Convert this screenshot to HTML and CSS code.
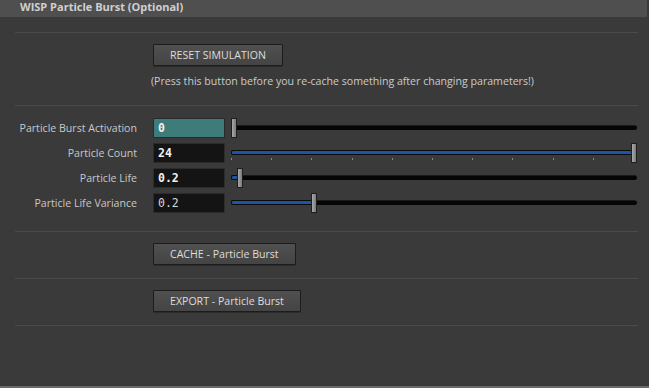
FILE: index.html
```html
<!DOCTYPE html>
<html lang="en">
<head>
  <meta charset="UTF-8">
  <title>WISP Particle Burst</title>
  <link rel="stylesheet" href="styles.css">
</head>
<body>
  <div class="panel-header">WISP Particle Burst (Optional)</div>

  <div class="panel-body">
    <hr class="sep">

    <!-- reset -->
    <div class="section">
      <div class="btn-row"><button class="btn btn-reset">RESET SIMULATION</button></div>
      <div class="help">(Press this button before you re-cache something after changing parameters!)</div>
    </div>

    <hr class="sep">

    <!-- parameters -->
    <div class="params">
      <div class="param">
        <label class="param-label">Particle Burst Activation</label>
        <div class="field field-active">0</div>
        <div class="slider">
          <div class="handle"></div>
          <div class="track"></div>
        </div>
      </div>

      <div class="param">
        <label class="param-label">Particle Count</label>
        <div class="field">24</div>
        <div class="slider slider-ticks">
          <div class="fill fill-grow"></div>
          <div class="handle"></div>
        </div>
      </div>

      <div class="param">
        <label class="param-label">Particle Life</label>
        <div class="field">0.2</div>
        <div class="slider">
          <div class="fill" style="width: 5px"></div>
          <div class="handle"></div>
          <div class="track"></div>
        </div>
      </div>

      <div class="param">
        <label class="param-label">Particle Life Variance</label>
        <div class="field field-plain">0.2</div>
        <div class="slider">
          <div class="fill" style="width: 79px"></div>
          <div class="handle"></div>
          <div class="track"></div>
        </div>
      </div>
    </div>

    <hr class="sep">

    <div class="section btn-section">
      <div class="btn-row"><button class="btn">CACHE - Particle Burst</button></div>
    </div>

    <hr class="sep">

    <div class="section btn-section">
      <div class="btn-row"><button class="btn">EXPORT - Particle Burst</button></div>
    </div>

    <hr class="sep">
  </div>
</body>
</html>
```

FILE: styles.css
```css
html, body {
  height: 100%;
}

body {
  margin: 0;
  background-color: #3a3a3a;
  color: #cccccc;
  font-family: 'Open Sans', 'Noto Sans', sans-serif;
  font-size: 10.6px;
  box-sizing: border-box;
  border-bottom: 2px solid #6a6a6a;
  overflow: hidden;
}

.panel-header {
  height: 17px;
  line-height: 13px;
  margin-right: 2px;
  padding-left: 20px;
  background-color: #4f4f4f;
  color: #cfcfcf;
  font-weight: bold;
  font-size: 11px;
}

.panel-body {
  padding-top: 15px;
}

.sep {
  margin: 0 11px 0 15px;
  border: 0;
  border-top: 1px solid #4a4a4a;
  height: 0;
}

.section {
  padding-left: 153px;
}

.btn-row {
  padding-top: 11px;
}

.btn {
  display: block;
  height: 22px;
  padding: 0 16px;
  font-family: 'Open Sans', 'Noto Sans', sans-serif;
  font-size: 10.6px;
  color: #dcdcdc;
  background: linear-gradient(#505050, #444444);
  border: 1px solid #1c1c1c;
  border-radius: 1px;
  box-shadow: 0 1px 0 #2c2c2c;
}

.btn-reset {
  width: 130px;
  padding: 0;
}

.help {
  margin-left: -2px;
  padding: 7px 0 16px;
  line-height: 16px;
  color: #cacaca;
}

.btn-section {
  padding-bottom: 13px;
}

.params {
  padding: 9px 0 16px;
}

.param {
  display: flex;
  align-items: center;
  height: 25px;
}

.param-label {
  width: 137px;
  text-align: right;
  color: #c8c8c8;
  margin-right: 16px;
}

.field {
  width: 72px;
  height: 20px;
  line-height: 18px;
  padding-left: 4px;
  box-sizing: border-box;
  background-color: #141414;
  border: 1px solid #2c2c2c;
  color: #f0f0f0;
  font-family: 'DejaVu Sans Mono', monospace;
  font-weight: bold;
  font-size: 11.5px;
}

.field-active {
  background-color: #3e7c79;
  border-color: #2a2a2a;
}

.field-plain {
  font-weight: normal;
  color: #d8d8d8;
}

.slider {
  flex: 1;
  display: flex;
  align-items: center;
  height: 20px;
  margin: 0 12px 0 6px;
}

.slider-ticks {
  background-image: repeating-linear-gradient(to right, #8a8a8a 0 1px, transparent 1px 40.2px);
  background-size: 100% 2px;
  background-position: 0 15px;
  background-repeat: no-repeat;
}

.track {
  flex: 1;
  height: 4px;
  background-color: #050505;
  border-top: 1px solid #1a1a1a;
  border-radius: 0 3px 3px 0;
}

.fill {
  height: 3px;
  background-color: #1d55a0;
  border-top: 1px solid #0a0a0a;
  border-bottom: 1px solid #0a0a0a;
  border-left: 1px solid #0a0a0a;
  border-radius: 2px 0 0 2px;
}

.fill-grow {
  flex: 1;
}

.handle {
  width: 4px;
  height: 18px;
  background: linear-gradient(to right, #a8a8a8, #7a7a7a);
  border: 1px solid #1e1e1e;
}
```
